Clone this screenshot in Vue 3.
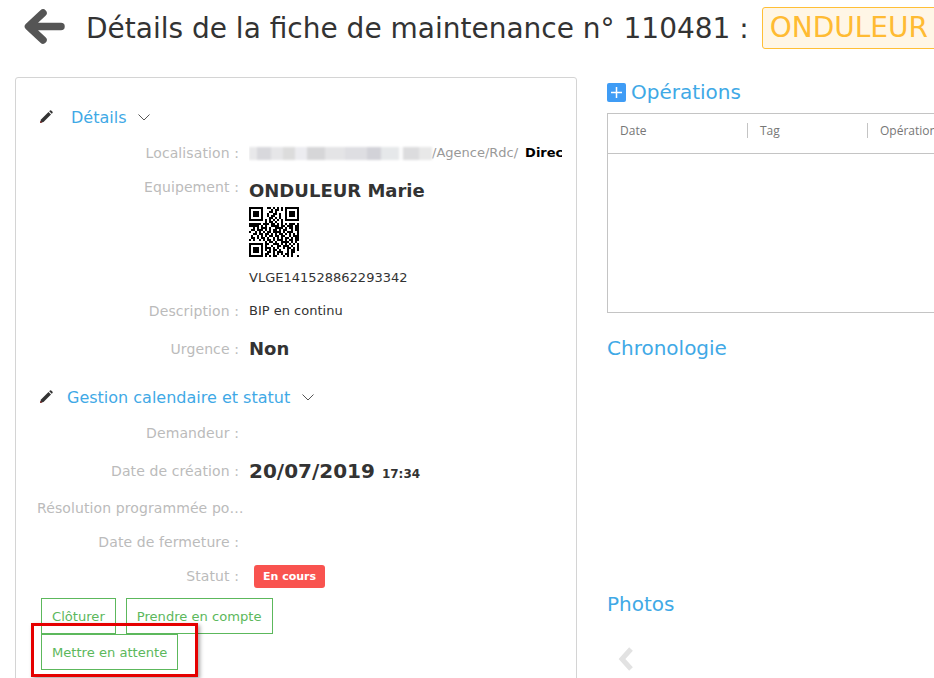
<template>
  <div class="page">
    <header class="page-head">
      <svg class="back" viewBox="0 0 42 36" width="42" height="36">
        <path d="M19 3 L4.5 16.5 L19 30 M5 16.5 L37 16.5" fill="none" stroke="#555" stroke-width="7.5" stroke-linecap="round" stroke-linejoin="round" />
      </svg>
      <h1 class="title">Détails de la fiche de maintenance n° 110481 :</h1>
      <span class="tag-warning">ONDULEUR Marie</span>
    </header>

    <div class="columns">
      <section class="card">
        <div class="section-head first">
          <svg class="pencil" viewBox="0 0 14 14" width="14" height="14">
            <path d="M1 13 L2 9.5 L9.5 2 L12 4.5 L4.5 12 Z" fill="#333" />
            <path d="M10.2 1.3 L11 .5 Q11.6 0 12.2 .5 L13.5 1.8 Q14 2.4 13.5 3 L12.7 3.8 Z" fill="#333" />
            <path d="M1 13 L1.6 10.8 L3.2 12.4 Z" fill="#8a2a2a" />
          </svg>
          <span class="section-title">Détails</span>
          <svg class="chevron" viewBox="0 0 12 7" width="12" height="7">
            <path d="M.5 .5 L6 6 L11.5 .5" fill="none" stroke="#555" stroke-width="1" />
          </svg>
        </div>

        <div class="row row-local">
          <span class="label">Localisation :</span>
          <div class="value local">
            <span class="blurred"></span><span class="path">/Agence/Rdc/</span>
            <b>Direction</b>
          </div>
        </div>

        <div class="row row-equip">
          <span class="label">Equipement :</span>
          <div class="value">
            <div class="big">ONDULEUR Marie</div>
            <svg class="qr" viewBox="0 0 25 25" width="50" height="50" shape-rendering="crispEdges">
              <template v-for="(line, y) in qrRows" :key="y">
                <template v-for="(cell, x) in line" :key="x">
                  <rect v-if="cell === '#'" :x="x" :y="y" width="1" height="1" fill="#000" />
                </template>
              </template>
            </svg>
            <div class="code">VLGE141528862293342</div>
          </div>
        </div>

        <div class="row row-desc">
          <span class="label">Description :</span>
          <div class="value small">BIP en continu</div>
        </div>

        <div class="row row-urgence">
          <span class="label">Urgence :</span>
          <div class="value big">Non</div>
        </div>

        <div class="section-head second">
          <svg class="pencil" viewBox="0 0 14 14" width="14" height="14">
            <path d="M1 13 L2 9.5 L9.5 2 L12 4.5 L4.5 12 Z" fill="#333" />
            <path d="M10.2 1.3 L11 .5 Q11.6 0 12.2 .5 L13.5 1.8 Q14 2.4 13.5 3 L12.7 3.8 Z" fill="#333" />
            <path d="M1 13 L1.6 10.8 L3.2 12.4 Z" fill="#8a2a2a" />
          </svg>
          <span class="section-title">Gestion calendaire et statut</span>
          <svg class="chevron" viewBox="0 0 12 7" width="12" height="7">
            <path d="M.5 .5 L6 6 L11.5 .5" fill="none" stroke="#555" stroke-width="1" />
          </svg>
        </div>

        <div class="row row-dem"><span class="label">Demandeur :</span></div>

        <div class="row row-date">
          <span class="label">Date de création :</span>
          <div class="value big date">20/07/2019 <small>17:34</small></div>
        </div>

        <div class="row row-res"><span class="label">Résolution programmée pour le :</span></div>
        <div class="row row-close"><span class="label">Date de fermeture :</span></div>

        <div class="row row-statut">
          <span class="label">Statut :</span>
          <span class="status">En cours</span>
        </div>

        <div class="actions">
          <button class="btn">Clôturer</button>
          <button class="btn">Prendre en compte</button>
          <button class="btn">Mettre en attente</button>
        </div>
      </section>

      <section class="side">
        <h2 class="side-title ops">
          <span class="plus">
            <svg viewBox="0 0 19 19" width="19" height="19">
              <path d="M9.5 4 V15 M4 9.5 H15" stroke="#fff" stroke-width="1.5" />
            </svg>
          </span>
          Opérations
        </h2>
        <div class="table">
          <div class="thead">
            <span class="th">Date</span>
            <span class="th">Tag</span>
            <span class="th">Opération</span>
          </div>
        </div>
        <h2 class="side-title chrono">Chronologie</h2>
        <h2 class="side-title photos">Photos</h2>
        <svg class="prev" viewBox="0 0 18 26" width="18" height="26">
          <path d="M14 3 L5 13 L14 23" fill="none" stroke="#e2e2e2" stroke-width="5" />
        </svg>
      </section>
    </div>

    <div class="highlight"></div>
  </div>
</template>

<script setup>
const qrRows = [
  '#######..##.#.#.#.#######',
  '#.....#....#.##.#.#.....#',
  '#.###.#...##.#....#.###.#',
  '#.###.#..#..##.#..#.###.#',
  '#.###.#..#.##..#..#.###.#',
  '#.....#...##.#.#..#.....#',
  '#######.#.#.#.#.#.#######',
  '........#.##.#..#........',
  '######.###.##.#.#.#.###.#',
  '#####.#.#..####.##.###.##',
  '..#.#.###.#..####.#.##.##',
  '.##.###.#.#.##.#.##..#.##',
  '#..#.#.#.##.####.#.###..#',
  '..##.##.##.#.#.##.#.#.#.#',
  '.#..#.#.#.##.##.##..#.###',
  '.##.#.##.#..#.#.#.##.#.##',
  '#.#..#.#.##.#.###.#.##.##',
  '........#.##.#..####.#.#.',
  '#######.##..###.#.#.#.#.#',
  '#.....#.#..#..##.###.#..#',
  '#.###.#.###.#.#..#.##.#.#',
  '#.###.#.#.#.##.#...#.##.#',
  '#.###.#..##.#.###..#.##..',
  '#.....#.##..#.#.#.##.#...',
  '#######.#.#.##...#.#.#..#'
]
</script>

<style scoped>
.page {
  position: relative;
  width: 934px;
  height: 678px;
  overflow: hidden;
  background: #fff;
  font-family: "DejaVu Sans", Verdana, sans-serif;
  color: #333;
}

.page-head {
  display: flex;
  align-items: center;
  height: 56px;
  padding-left: 24px;
  white-space: nowrap;
}

.back {
  flex-shrink: 0;
  margin-right: 20px;
  overflow: visible;
}

.title {
  flex-shrink: 0;
  margin: 0 13px 0 0;
  font-size: 28px;
  font-weight: 400;
  color: #333;
}

.tag-warning {
  flex-shrink: 0;
  height: 40px;
  line-height: 40px;
  padding: 0 7px;
  border: 1px solid #ffbf36;
  border-radius: 3px;
  background: #fff6e6;
  color: #ffbb33;
  font-size: 28px;
}

.columns {
  display: flex;
  align-items: flex-start;
  gap: 30px;
  padding: 21px 0 0 15px;
}

.card {
  flex: 0 0 562px;
  min-width: 0;
  box-sizing: border-box;
  height: 640px;
  border: 1px solid #d4d4d4;
  border-radius: 3px;
  padding: 0 14px 0 21px;
}

.section-head {
  display: flex;
  align-items: center;
  height: 24px;
}

.section-head.first {
  margin-top: 27px;
}

.section-head.second {
  margin-top: 25px;
}

.pencil {
  margin: 0 3px 0 2px;
  flex-shrink: 0;
}

.section-title {
  font-size: 16px;
  color: #3fa9e6;
}

.first .section-title {
  margin-left: 15px;
}

.second .section-title {
  margin-left: 11px;
}

.chevron {
  margin-left: 12px;
}

.row {
  display: flex;
  align-items: flex-start;
}

.label {
  flex: 0 0 202px;
  box-sizing: border-box;
  text-align: right;
  font-size: 14px;
  line-height: 20px;
  letter-spacing: .1px;
  color: #bbb;
  white-space: nowrap;
  overflow: hidden;
  text-overflow: ellipsis;
}

.value {
  margin-left: 10px;
  min-width: 0;
  flex: 1;
}

.local {
  font-size: 13px;
  line-height: 20px;
  white-space: nowrap;
  overflow: hidden;
  color: #999;
  display: flex;
  align-items: center;
}

.local b {
  color: #000;
  margin-left: 7px;
}

.blurred {
  flex-shrink: 0;
  width: 183px;
  height: 13px;
  background: linear-gradient(90deg, #e8e8ea 0 8px, #d8d8dc 8px 22px, #e6e6e8 22px 34px, #dcdcdc 34px 46px, #ececf0 46px 58px, #d6d6d8 58px 76px, #e4e4e6 76px 96px, #dedee2 96px 118px, #d2d2d8 118px 132px, #e6e8ea 132px 150px, #fbfbfb 150px 154px, #dcdcde 154px 170px, #e8e8e8 170px 183px);
  filter: blur(1px);
}

.row-local { margin-top: 14px; }
.row-equip { margin-top: 14px; }
.row-equip .value { padding-top: 3px; }
.row-desc { margin-top: 15px; }
.row-urgence { margin-top: 17px; align-items: center; }
.row-dem { margin-top: 14px; }
.row-date { margin-top: 16px; }
.row-date .label { padding-top: 2px; }
.row-res { margin-top: 13px; }
.row-res .label { flex-basis: 208px; }
.row-close { margin-top: 14px; }
.row-statut { margin-top: 14px; }

.big {
  font-size: 18px;
  line-height: 22px;
  font-weight: 700;
  color: #333;
}

.date {
  padding-top: 1px;
  font-size: 20px;
}

.big small {
  font-size: 12px;
  font-weight: 700;
}

.qr {
  display: block;
  margin-top: 5px;
}

.code {
  margin-top: 13px;
  font-size: 13px;
  line-height: 16px;
  color: #333;
}

.small {
  font-size: 13px;
  line-height: 20px;
  color: #333;
}

.status {
  margin: -1px 0 0 15px;
  padding: 0 9px;
  height: 23px;
  line-height: 23px;
  border-radius: 3px;
  background: #f9534f;
  color: #fff;
  font-size: 11px;
  font-weight: 700;
}

.actions {
  display: flex;
  flex-wrap: wrap;
  gap: 0 10px;
  width: 300px;
  margin: 10px 0 0 4px;
}

.btn {
  height: 36px;
  padding: 0 10px;
  border: 1px solid #5cb85c;
  background: #fff;
  color: #5cb85c;
  font-family: inherit;
  font-size: 13.1px;
}

.side {
  flex: 1;
  min-width: 0;
}

.side-title {
  margin: 0;
  font-size: 20px;
  font-weight: 400;
  line-height: 28px;
  color: #3fa9e6;
}

.ops {
  display: flex;
  align-items: center;
  gap: 5px;
  padding-top: 1px;
  white-space: nowrap;
}

.plus {
  display: flex;
  width: 19px;
  height: 19px;
  border-radius: 2px;
  background: #3f9cf5;
}

.table {
  width: 340px;
  height: 200px;
  margin-top: 7px;
  border: 1px solid #c4c4c4;
  box-sizing: border-box;
}

.thead {
  display: flex;
  box-sizing: border-box;
  height: 40px;
  padding-bottom: 6px;
  align-items: center;
  border-bottom: 1px solid #c4c4c4;
  white-space: nowrap;
}

.th {
  flex: 0 0 120px;
  box-sizing: border-box;
  padding-left: 12px;
  height: 15px;
  line-height: 15px;
  font-family: "Open Sans", sans-serif;
  font-size: 12px;
  color: #777;
  border-right: 1px solid #c4c4c4;
}

.th:first-child {
  flex-basis: 140px;
}

.th:last-child {
  border-right: 0;
}

.chrono {
  margin-top: 21px;
}

.photos {
  margin-top: 228px;
}

.prev {
  display: block;
  margin: 28px 0 0 10px;
}

.highlight {
  position: absolute;
  left: 31px;
  top: 623px;
  width: 167px;
  height: 54px;
  box-sizing: border-box;
  border: 3px solid #e50000;
  box-shadow: 2px 2px 4px rgba(0, 0, 0, 0.35);
  pointer-events: none;
}
</style>
